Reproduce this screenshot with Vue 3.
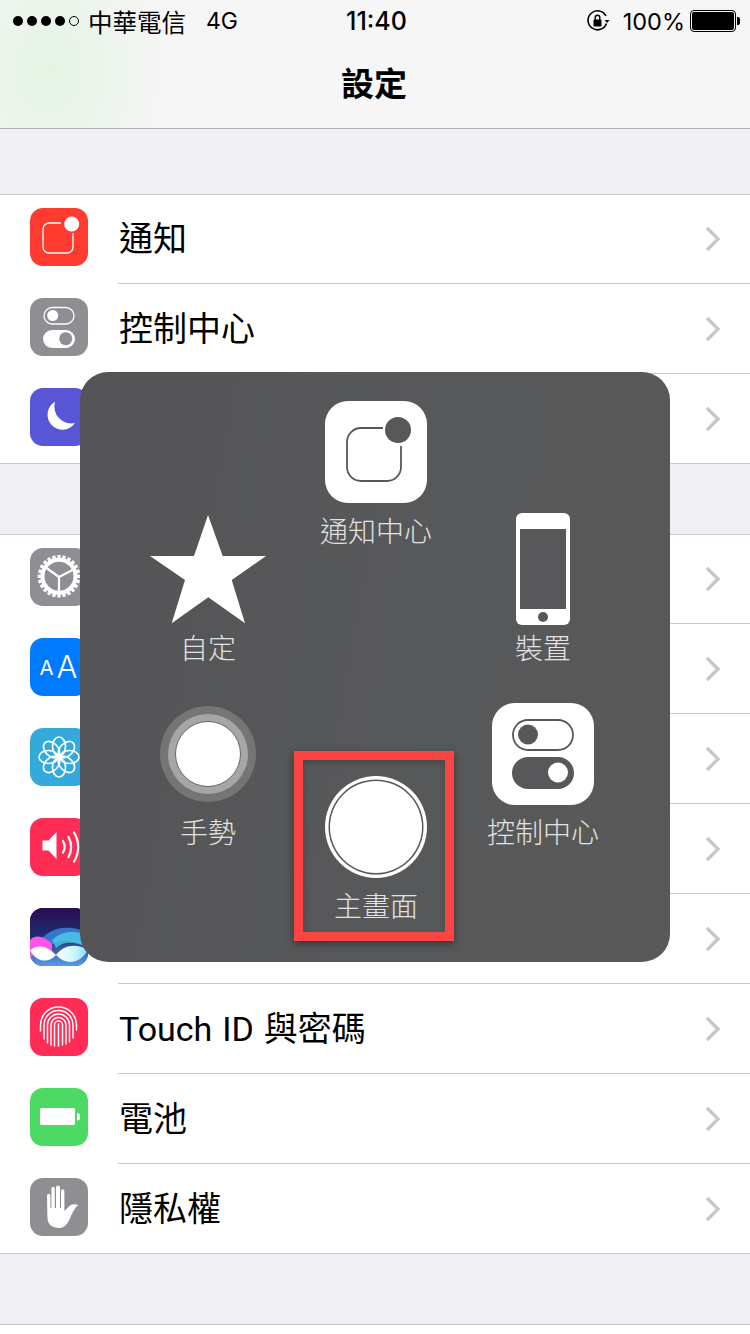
<script setup>
// 被選單蓋住的列不放文字，畫面上本來就看不到
const firstGroup = [
  { key: 'notify', label: '通知', bg: '#ff3b30' },
  { key: 'control', label: '控制中心', bg: '#8e8e93' },
  { key: 'moon', label: '', bg: '#5856d6' },
]
const secondGroup = [
  { key: 'gear', label: '', bg: '#8e8e93' },
  { key: 'text', label: '', bg: '#007aff' },
  { key: 'flower', label: '', bg: '#34aadc' },
  { key: 'sound', label: '', bg: '#ff2d55' },
  { key: 'siri', label: '', bg: '#1a1030' },
  { key: 'finger', label: 'Touch ID 與密碼', bg: '#ff2d55' },
  { key: 'battery', label: '電池', bg: '#4cd964' },
  { key: 'hand', label: '隱私權', bg: '#8e8e93' },
]
const groups = [firstGroup, secondGroup]
const gearTeeth = Array.from({ length: 24 }, (_, i) => i * 15)
const petals = [0, 45, 90, 135, 180, 225, 270, 315]
const dome = (r, left, right) =>
  `M${28.5 - r} ${left}V27A${r} ${r} 0 0 1 ${28.5 + r} 27V${right}`
const fingerArcs = [
  dome(18, 33, 32),
  dome(14.5, 41, 40),
  dome(11, 45, 44),
  dome(7.5, 47, 46),
  dome(4, 48, 47),
  'M28.500 26V48',
]
</script>

<template>
  <div class="screen">
    <header class="top">
      <div class="status">
        <div class="status-left">
          <span class="signal">
            <i v-for="n in 4" :key="n" class="dot" />
            <i class="dot empty" />
          </span>
          <span class="carrier">中華電信</span>
          <span class="net">4G</span>
        </div>
        <div class="clock">11:40</div>
        <div class="status-right">
          <svg class="lock" width="24" height="24" viewBox="0 0 24 24">
            <path d="M20.5 14.5A9.5 9.5 0 1 1 20 7" fill="none" stroke="#000" stroke-width="1.6" />
            <path d="M18.5 11h5l-2.5 3z" fill="#000" />
            <rect x="7.5" y="10.5" width="8" height="7" rx="1" fill="#000" />
            <path d="M9.2 11V8.5a2.3 2.3 0 0 1 4.6 0V11" fill="none" stroke="#000" stroke-width="1.4" />
          </svg>
          <span class="percent">100%</span>
          <span class="battery"><i /></span>
          <span class="battery-nub" />
        </div>
      </div>
      <h1 class="title">設定</h1>
    </header>

    <main class="list">
      <section v-for="(group, g) in groups" :key="g" class="group">
        <div v-for="row in group" :key="row.key" class="row">
          <div class="app-icon" :style="{ background: row.bg }">
            <svg width="58" height="58" viewBox="0 0 58 58">
              <template v-if="row.key === 'notify'">
                <path d="M31 15H19a6 6 0 0 0-6 6v18a6 6 0 0 0 6 6h18a6 6 0 0 0 6-6V25" fill="none" stroke="#fff" stroke-width="1.300" />
                <circle cx="41.700" cy="16" r="7.500" fill="#fff" />
              </template>
              <template v-else-if="row.key === 'control'">
                <rect x="14" y="9.500" width="30" height="16.500" rx="8.250" fill="none" stroke="#fff" stroke-width="1.300" />
                <circle cx="22.700" cy="17.500" r="5.500" fill="#fff" />
                <rect x="13" y="32" width="32" height="18" rx="9" fill="#fff" />
                <circle cx="35.700" cy="40.700" r="6.500" fill="#8e8e93" />
              </template>
              <template v-else-if="row.key === 'moon'">
                <path d="M25 13.700A15 15 0 1 0 45 35A17 17 0 0 1 25 13.700z" fill="#fff" />
              </template>
              <template v-else-if="row.key === 'gear'">
                <circle cx="29" cy="28.300" r="16.500" fill="none" stroke="#fff" stroke-width="4" />
                <rect v-for="a in gearTeeth" :key="a" x="27.300" y="7" width="3.400" height="6" fill="#fff" :transform="`rotate(${a} 29 28.300)`" />
                <path d="M29 29V44M29 29L16.500 20M29 29L42.500 22" stroke="#fff" stroke-width="2.200" fill="none" />
              </template>
              <template v-else-if="row.key === 'text'">
                <text x="9.500" y="37" class="icon-small">A</text>
                <text x="26.500" y="39.700" class="icon-big">A</text>
              </template>
              <template v-else-if="row.key === 'flower'">
                <ellipse v-for="a in petals" :key="a" cx="29" cy="18.500" rx="6.500" ry="9.500" fill="none" stroke="#fff" stroke-width="1.700" :transform="`rotate(${a} 29 29)`" />
                <circle cx="29" cy="29" r="3.300" fill="#fff" />
              </template>
              <template v-else-if="row.key === 'sound'">
                <path d="M12.500 22.500h6l8-8.500v27l-8-8.500h-6z" fill="#fff" />
                <path d="M33 23c2 3.500 2 8 0 11.500M38.500 19c3.500 6 3.500 14 0 20M44 14.500c5.500 8.500 5.500 20.500 0 29" fill="none" stroke="#fff" stroke-width="2.200" stroke-linecap="round" />
              </template>
              <template v-else-if="row.key === 'siri'">
                <defs>
                  <linearGradient id="siriBg" x1="0" y1="0" x2="0" y2="1">
                    <stop offset="0" stop-color="#2a0b52" />
                    <stop offset="0.5" stop-color="#1f2f70" />
                    <stop offset="1" stop-color="#5b9be8" />
                  </linearGradient>
                  <linearGradient id="siriLens" x1="0" y1="0" x2="1" y2="0">
                    <stop offset="0" stop-color="#ffffff" />
                    <stop offset="0.6" stop-color="#c8f6fb" />
                    <stop offset="1" stop-color="#7fdcf5" />
                  </linearGradient>
                </defs>
                <rect width="58" height="58" fill="url(#siriBg)" />
                <path d="M8 36C18 18 40 16 58 25v14C44 32 26 30 14 42z" fill="#3f8fe8" opacity=".75" />
                <path d="M22 32C32 22 46 22 58 28v12C48 34 34 32 26 40z" fill="#4fd8f0" opacity=".7" />
                <path d="M0 32C6 26 14 28 22 36v10C14 42 6 44 0 50z" fill="#ff55e6" />
                <path d="M0 42C10 35 18 39 26 47 18 56 6 54 0 42z" fill="#fff" />
                <path d="M26 47C34 37 46 35 58 42 50 56 36 58 26 47z" fill="url(#siriLens)" />
              </template>
              <template v-else-if="row.key === 'finger'">
                <g fill="none" stroke="#fff" stroke-width="1.500" stroke-linecap="round">
                  <path v-for="(d, i) in fingerArcs" :key="i" :d="d" />
                </g>
              </template>
              <template v-else-if="row.key === 'battery'">
                <rect x="10" y="20" width="35" height="17" rx="1.500" fill="#fff" />
                <path d="M47 24.700l3 1.500v5l-3 1.500z" fill="#fff" />
              </template>
              <template v-else-if="row.key === 'hand'">
                <path d="M17 17.500a1.700 1.700 0 0 1 3.400 0V30h1V10.500a1.700 1.700 0 0 1 3.400 0V30h1.200V9.500a2 2 0 0 1 4 0V30h1V13a1.700 1.700 0 0 1 3.400 0V33l5-5c2-2 6-2.500 9-1-3 2-5 6-7 10-2 5-5 13-12 13-8 0-12-4-12-11z" fill="#fff" />
              </template>
            </svg>
          </div>
          <div class="row-body">
            <span v-if="row.label" class="row-label">{{ row.label }}</span>
            <svg class="chevron" width="18" height="26" viewBox="0 0 18 26">
              <path d="M3 2l11 11L3 24" fill="none" stroke="#c7c7cc" stroke-width="3.400" />
            </svg>
          </div>
        </div>
      </section>
      <div class="tail" />
    </main>

    <!-- AssistiveTouch 選單 -->
    <div class="popup">
      <div class="item item-notify">
        <span class="tile">
          <svg width="102" height="102" viewBox="0 0 102 102">
            <path d="M58 27H36a14 14 0 0 0-14 14v25a14 14 0 0 0 14 14h26a14 14 0 0 0 14-14V45" fill="none" stroke="#58585a" stroke-width="1.800" />
            <circle cx="73" cy="29" r="13" fill="#58585a" />
          </svg>
        </span>
        <span class="cap">通知中心</span>
      </div>
      <div class="item item-star">
        <svg width="116" height="110" viewBox="0 0 116 110">
          <path d="M58 0L72.700 41H116L81.700 65 95 108.300 58.300 82.300 21.700 108.300 35 65 0 41H44z" fill="#fff" />
        </svg>
        <span class="cap">自定</span>
      </div>
      <div class="item item-device">
        <svg width="54" height="112" viewBox="0 0 54 112">
          <rect width="54" height="112" rx="6" fill="#fff" />
          <rect x="4" y="16" width="46" height="80" fill="#58585a" />
          <circle cx="27" cy="104" r="5" fill="#58585a" />
        </svg>
        <span class="cap">裝置</span>
      </div>
      <div class="item item-gesture">
        <span class="gesture">
          <span class="gesture-mid"><span class="gesture-core" /></span>
        </span>
        <span class="cap">手勢</span>
      </div>
      <div class="item item-home">
        <span class="home"><span class="home-core" /></span>
        <span class="cap">主畫面</span>
      </div>
      <div class="item item-control">
        <span class="tile">
          <svg width="102" height="102" viewBox="0 0 102 102">
            <rect x="21" y="17" width="60" height="30" rx="15" fill="none" stroke="#58585a" stroke-width="1.800" />
            <circle cx="36" cy="31.500" r="10" fill="#58585a" />
            <rect x="20" y="54" width="62" height="32" rx="16" fill="#58585a" />
            <circle cx="66" cy="69.500" r="10" fill="#fff" />
          </svg>
        </span>
        <span class="cap">控制中心</span>
      </div>
      <div class="mark" />
    </div>
  </div>
</template>

<style>
html, body { margin: 0; background: #efeff4; }
</style>

<style scoped>
.screen {
  position: relative;
  width: 750px; height: 1334px; overflow: hidden;
  background: #efeff4; color: #000;
  font-family: "Inter", "Noto Sans CJK TC", sans-serif;
}
.top {
  height: 128px; border-bottom: 1px solid #b2b2b2;
  background:
    radial-gradient(ellipse 120px 160px at 50px 70px, #e4f4e4 0%, rgba(228, 244, 228, 0) 100%),
    #f6f6f6;
}
.status {
  height: 42px; padding: 0 10px 0 13px;
  display: flex; align-items: center; justify-content: space-between;
  position: relative; font-size: 24px;
}
.status-left { display: flex; align-items: center; }
.signal { display: flex; gap: 4px; margin-right: 9px; }
.dot { width: 10px; height: 10px; border-radius: 50%; background: #000; box-sizing: border-box; }
.dot.empty { background: none; border: 1px solid #000; }
.carrier { font-size: 24.500px; width: 118px; }
.net { font-size: 23px; }
.clock {
  position: absolute; left: 346px; top: 5px;
  font-size: 25px; font-weight: 500; line-height: 32px;
}
.status-right { display: flex; align-items: center; }
.lock { margin-right: 13px; }
.percent { margin-right: 5px; font-size: 23.500px; }
.battery {
  width: 46px; height: 22px; box-sizing: border-box;
  border: 1px solid #000; border-radius: 4px; padding: 1px; display: block;
}
.battery i { display: block; height: 100%; background: #000; border-radius: 2px; }
.battery-nub { width: 3px; height: 8px; background: #000; border-radius: 0 2px 2px 0; margin-left: 1px; }
.title {
  margin: 0; text-align: center; padding-right: 2px;
  font-size: 33px; font-weight: 700; line-height: 84px; height: 86px;
}
.list { padding-top: 65px; }
.group {
  background: #fff; border-top: 1px solid #c8c7cc; margin-bottom: 70px;
}
.row { display: flex; height: 90px; padding-left: 30px; box-sizing: border-box; }
.row:first-child { height: 89px; }
.row:first-child .app-icon { margin-top: 13px; }
.app-icon {
  width: 58px; height: 58px; border-radius: 13px; margin-top: 14px;
  overflow: hidden; flex-shrink: 0;
}
.app-icon svg { display: block; }
.icon-small { font-size: 20.500px; fill: #fff; font-family: "Inter", sans-serif; font-weight: 400; }
.icon-big { font-size: 31px; fill: #fff; font-family: "Inter", sans-serif; font-weight: 300; }
.row-body {
  flex: 1; margin-left: 30px; padding-right: 28px;
  display: flex; align-items: center; justify-content: space-between;
  border-bottom: 1px solid #c8c7cc;
}
.chevron { margin-left: auto; }
.row:last-child { position: relative; }
.row:last-child .row-body { border-bottom-color: transparent; }
.row:last-child::after {
  content: ""; position: absolute; left: 0; right: 0; bottom: 0; height: 1px; background: #c8c7cc;
}
.row-label {
  font-family: "Roboto", "Noto Sans CJK TC", sans-serif;
  font-size: 34px; font-weight: 400; line-height: 1;
  margin-left: 1px; word-spacing: 1.500px;
}
.tail { height: 10px; background: #fff; border-top: 1px solid #c8c7cc; }

.popup {
  position: absolute; left: 80px; top: 372px;
  width: 590px; height: 590px; border-radius: 28px;
  background: linear-gradient(100deg, #545456 0%, #575859 50%, #59595a 100%);
}
.item {
  position: absolute; transform: translateX(-50%);
  display: flex; flex-direction: column; align-items: center;
}
.item svg { display: block; }
.item-notify { left: 296px; top: 29px; }
.item-star { left: 128px; top: 143px; }
.item-device { left: 463px; top: 141px; }
.item-gesture { left: 128px; top: 334px; }
.item-home { left: 296px; top: 404px; }
.item-control { left: 463px; top: 331px; }
.tile { width: 102px; height: 102px; border-radius: 23px; background: #fff; display: block; overflow: hidden; }
.cap {
  font-size: 28px; line-height: 40px; margin-top: 9px; font-weight: 300;
  color: #e2e2e2; white-space: nowrap;
}
.item-gesture .cap { margin-top: 11px; }
.item-control .cap { margin-top: 8px; }
.item-star .cap, .item-device .cap { margin-top: 4px; }
.gesture {
  width: 96px; height: 96px; border-radius: 50%; background: #757575;
  display: flex; align-items: center; justify-content: center;
}
.gesture-mid {
  width: 80px; height: 80px; border-radius: 50%; background: #a6a6a6;
  display: flex; align-items: center; justify-content: center;
}
.gesture-core {
  width: 64px; height: 64px; border-radius: 50%; background: #fff; border: 1px solid #666;
}
.home {
  width: 102px; height: 102px; border-radius: 50%; background: #fff;
  display: flex; align-items: center; justify-content: center;
}
.home-core {
  width: 92px; height: 92px; box-sizing: border-box; border-radius: 50%; background: #fff;
  border: 0; box-shadow: 0 0 0 1.500px #58585a;
}
.mark {
  position: absolute; left: 214px; top: 379px;
  width: 160px; height: 190px; box-sizing: border-box;
  border: 9px solid #fb4444;
  box-shadow: 0 3px 8px rgba(0, 0, 0, 0.4), inset 0 3px 6px rgba(0, 0, 0, 0.2);
}
</style>
